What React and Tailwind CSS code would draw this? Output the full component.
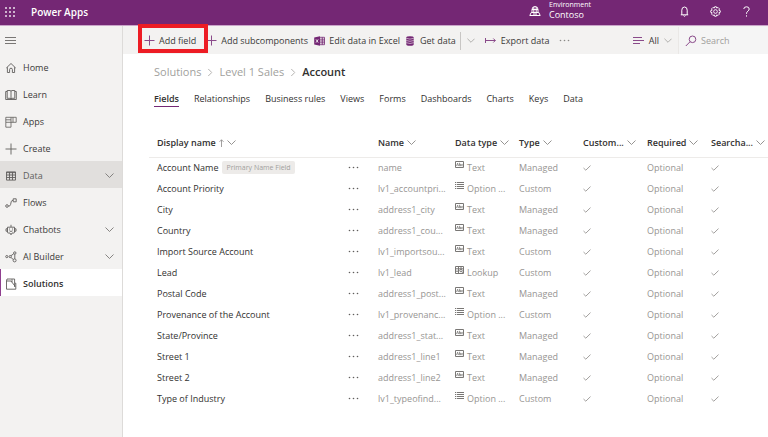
const DEFAULTS = {
  fill: "none",
  stroke: "currentColor",
  strokeWidth: 1,
  "aria-hidden": true,
};

function Svg({ box = "0 0 12 12", className = "size-3", children, ...rest }) {
  return (
    <svg {...DEFAULTS} {...rest} viewBox={box} className={"shrink-0 " + className}>
      {children}
    </svg>
  );
}

const Chevron = ({ className = "h-[5px] w-[9px] text-[#8a8886]" }) => (
  <Svg box="0 0 9 5" className={className} strokeWidth={0.9}>
    <path d="M0.5 0.5 4.5 4.5 8.5 0.5" />
  </Svg>
);

const Plus = ({ className = "size-[11px] text-[#8a4a8a]" }) => (
  <Svg box="0 0 11 11" className={className}>
    <path d="M5.5 0.5V10.5M0.5 5.5H10.5" />
  </Svg>
);

const Dots = () => (
  <Svg box="0 0 11 3" className="h-[3px] w-[11px]" stroke="none" fill="currentColor">
    <circle cx="1.5" cy="1.5" r="0.8" />
    <circle cx="5.5" cy="1.5" r="0.8" />
    <circle cx="9.5" cy="1.5" r="0.8" />
  </Svg>
);

const ICONS = {
  home: (
    <path d="M1.3 6 6 1.5 10.7 6M2.4 5.2V10.5H4.6V7.6Q4.6 6.2 6 6.2Q7.4 6.2 7.4 7.6V10.5H9.6V5.2" />
  ),
  learn: (
    <path d="M2.2 1.5H5Q6 1.5 6 2.5Q6 1.5 7 1.5H9.8V9.3H7Q6 9.3 6 10.3Q6 9.3 5 9.3H2.2ZM6 2.5V10M2.2 2.5H0.7V10.5H11.3V2.5H9.8" />
  ),
  apps: <path d="M0.8 1.3H11.2V6.3H0.8ZM0.8 6.3V11.2H6V1.3M6 6.3H6M8 1.3V6.3M0.8 3.8H6" strokeWidth={0.8} />,
  create: <path d="M6 0.5V11.5M0.5 6H11.5" />,
  data: (
    <path d="M1.5 1.9H10.5V10.1H1.5ZM1.5 2.6H10.5M1.5 5H10.5M1.5 7.5H10.5M4.5 2V10M7.5 2V10" />
  ),
  flows: (
    <>
      <circle cx="2" cy="9" r="1.3" />
      <path d="M3.4 9H4.2Q5.2 9 5.6 7.5L6.2 4.8Q6.6 3.3 8 3.3M8.2 1.8H11.2V4.8H8.2Z" />
    </>
  ),
  chatbots: (
    <>
      <path d="M6 0.8V3M2.5 3.2H9.5V8.3Q9.5 9 8.8 9H7L6 10.8 5 9H3.2Q2.5 9 2.5 8.3ZM2.5 4.8H1V7.2H2.5M9.5 4.8H11V7.2H9.5M4.4 6.8Q6 8.2 7.6 6.8" />
      <path d="M4.5 4.5V5.5M7.5 4.5V5.5" />
    </>
  ),
  ai: (
    <>
      <circle cx="1.8" cy="5.6" r="1.1" />
      <circle cx="5.2" cy="5.6" r="1.1" />
      <circle cx="9.8" cy="2" r="1.2" />
      <circle cx="9.6" cy="9.4" r="1.5" />
      <path d="M6 4.7 8.8 2.7M6 6.5 8.3 8.5M9.8 3.2V7.9" />
    </>
  ),
  solutions: (
    <path d="M1.5 3V11.2H10.8V5.2M1.5 3 2 1H9.6V5.2H10.8M1.5 3H6L10.2 8.4M9.6 5.2V9M7 1.2V4.2" />
  ),
};

const NAV = [
  { label: "Home", icon: "home" },
  { label: "Learn", icon: "learn" },
  { label: "Apps", icon: "apps" },
  { label: "Create", icon: "create" },
  { label: "Data", icon: "data", menu: true, shaded: true },
  { label: "Flows", icon: "flows" },
  { label: "Chatbots", icon: "chatbots", menu: true },
  { label: "AI Builder", icon: "ai", menu: true },
  { label: "Solutions", icon: "solutions", current: true },
];

const TABS = [
  "Fields",
  "Relationships",
  "Business rules",
  "Views",
  "Forms",
  "Dashboards",
  "Charts",
  "Keys",
  "Data",
];

const COLUMNS = ["Name", "Data type", "Type", "Custom...", "Required", "Searcha..."];

const FIELDS = [
  ["Account Name", "name", "Text", "Managed"],
  ["Account Priority", "lv1_accountpri...", "Option ...", "Custom"],
  ["City", "address1_city", "Text", "Managed"],
  ["Country", "address1_cou...", "Text", "Managed"],
  ["Import Source Account", "lv1_importsou...", "Text", "Custom"],
  ["Lead", "lv1_lead", "Lookup", "Custom"],
  ["Postal Code", "address1_post...", "Text", "Managed"],
  ["Provenance of the Account", "lv1_provenanc...", "Option ...", "Custom"],
  ["State/Province", "address1_stat...", "Text", "Managed"],
  ["Street 1", "address1_line1", "Text", "Managed"],
  ["Street 2", "address1_line2", "Text", "Managed"],
  ["Type of Industry", "lv1_typeofind...", "Option ...", "Custom"],
];

function TypeIcon({ type }) {
  if (type === "Text") {
    return (
      <Svg box="0 0 9 7" className="h-[7px] w-[9px] text-[#797775]">
        <path d="M0.5 0.5H8.5V6.5H0.5Z" />
        <path d="M1.6 5 2.6 2.2 3.5 5M4.6 1.8V4.8H5.5V3.4H4.6M7.7 3.4H6.7V4.8H7.7" strokeWidth={0.8} />
      </Svg>
    );
  }
  if (type === "Lookup") {
    return (
      <Svg box="0 0 9 8" className="h-2 w-[9px] text-[#797775]">
        <path d="M0.5 0.5H8.5V7.5H0.5ZM0.5 2.8H8.5M0.5 5.2H3.5M3.5 0.5V7.5M6 0.5V3" />
        <circle cx="6" cy="4.6" r="1.2" />
        <path d="M6.9 5.5 8.3 7" />
      </Svg>
    );
  }
  return (
    <Svg box="0 0 9 7" className="h-[7px] w-[9px] text-[#797775]">
      <path d="M0 0.5H1.3M2 0.5H9M0 2.5H1.3M2 2.5H9M0 4.5H1.3M2 4.5H9M0 6.5H1.3M2 6.5H9" />
    </Svg>
  );
}

const Check = () => (
  <Svg box="0 0 8 6" className="h-1.5 w-2 text-[#979593]" role="img" aria-hidden={false} aria-label="Yes">
    <path d="M0.5 3 2.8 5.2 7.5 0.6" strokeWidth={0.9} />
  </Svg>
);

function Header() {
  return (
    <header className="flex h-[26px] items-center border-b border-[#c9a4c9] bg-[#742774] pb-0.5 text-white">
      <button type="button" aria-label="App launcher" className="ml-[5px]">
        <Svg box="0 0 10 10" className="size-[10px]" stroke="none" fill="currentColor">
          {[1, 5, 9].map((y) =>
            [1, 5, 9].map((x) => <rect key={x + "-" + y} x={x - 0.8} y={y - 0.8} width="1.6" height="1.6" />)
          )}
        </Svg>
      </button>
      <span className="ml-4 pt-0.5 text-[10px] font-semibold">Power Apps</span>
      <button type="button" className="ml-auto flex w-[150px] items-start gap-2 self-start text-left">
        <Svg box="0 0 12 12" className="mt-[5px] size-3">
          <path d="M3 7.5V4.5Q3 1.5 6 1.5Q9 1.5 9 4.5V7.5M3 4.5H9M4.8 2V7.5M7.2 2V7.5M2.2 7.5H9.8L11.2 10.5H0.8ZM4 9H8" />
        </Svg>
        <span className="flex flex-col">
          <span className="text-[7px] leading-[9px]">Environment</span>
          <span className="text-[9px] leading-[11px]">Contoso</span>
        </span>
      </button>
      <div className="flex items-center gap-5 pr-4">
        <button type="button" aria-label="Notifications">
          <Svg box="0 0 11 11" className="size-[11px]">
            <path d="M1.8 8.8H9.2M2.8 8.8V4.2Q2.8 1 5.5 1Q8.2 1 8.2 4.2V8.8M4.5 9.6Q5.5 11 6.5 9.6" />
          </Svg>
        </button>
        <button type="button" aria-label="Settings">
          <Svg box="0 0 12 12" className="size-[11px]">
            <path d="M5.1 0.8H6.9L7.3 2.2 8.8 1.6 10.3 3.1 9.7 4.6 11.2 5.1V6.9L9.7 7.3 10.3 8.8 8.8 10.3 7.3 9.7 6.9 11.2H5.1L4.7 9.7 3.2 10.3 1.7 8.8 2.3 7.3 0.8 6.9V5.1L2.3 4.6 1.7 3.1 3.2 1.6 4.7 2.2Z" />
            <circle cx="6" cy="6" r="2" />
          </Svg>
        </button>
        <button type="button" aria-label="Help">
          <Svg box="0 0 11 11" className="size-[11px]">
            <path d="M2.8 3Q2.8 0.8 5.5 0.8Q8.2 0.8 8.2 3Q8.2 4.3 6.8 5.2Q5.5 6 5.5 7.8M5.5 9.3V10.6" />
          </Svg>
        </button>
      </div>
    </header>
  );
}

function Sidebar() {
  return (
    <nav aria-label="Main" className="w-[123px] shrink-0 border-r border-[#dddbd9] bg-[#f3f2f1]">
      <button type="button" aria-label="Collapse navigation" className="flex h-[27px] items-center pt-px pl-[5px] text-[#797775]">
        <Svg box="0 0 11 7" className="h-[7px] w-[11px]">
          <path d="M0 0.5H11M0 3.5H11M0 6.5H11" />
        </Svg>
      </button>
      <ul>
        {NAV.map(({ label, icon, menu, shaded, current }) => (
          <li key={label}>
            <a
              href="#"
              aria-current={current ? "page" : undefined}
              className={
                "flex h-[27px] items-center gap-[6px] border-l pt-0.5 pr-2 pl-1 text-[9px] " +
                (current
                  ? "border-[#8f3f8f] bg-white font-semibold text-[#323130]"
                  : shaded
                    ? "border-transparent bg-[#e1dfdd] text-[#605e5c]"
                    : "border-transparent text-[#3b3a39]")
              }
            >
              <Svg strokeWidth={0.9} className="size-3 text-[#605e5c]">
                {ICONS[icon]}
              </Svg>
              {label}
              {menu && (
                <span className="ml-auto">
                  <Chevron className="h-[5px] w-[9px] text-[#797775]" />
                </span>
              )}
            </a>
          </li>
        ))}
      </ul>
    </nav>
  );
}

function Toolbar() {
  return (
    <div className="flex h-7 shrink-0 items-center bg-[#f3f2f1] pt-px pl-[21px] text-[9px] whitespace-nowrap text-[#3b3a39]">
      <div className="flex items-center gap-1.5">
        <button type="button" className="relative mr-1 flex items-center gap-1">
          <Plus />
          Add field
          <span className="pointer-events-none absolute -top-2.5 -right-3 -bottom-1.5 -left-1.5 z-10 border-4 border-[#ed1c24]" />
        </button>
        <button type="button" className="flex items-center gap-1">
          <Plus />
          Add subcomponents
        </button>
        <button type="button" className="flex items-center gap-1">
          <Svg box="0 0 11 10" className="h-[10px] w-[11px] text-[#742774]" strokeWidth={0.8}>
            <path d="M6 1.3H10.5V8.7H6M6 3.2H10.5M6 5H10.5M6 6.8H10.5M8.3 1.3V8.7" />
            <path d="M0.2 1.4 6 0.3V9.7L0.2 8.6Z" fill="currentColor" stroke="none" />
            <path d="M2 3.4 4.2 6.6M4.2 3.4 2 6.6" stroke="#fff" />
          </Svg>
          Edit data in Excel
        </button>
        <button type="button" className="flex items-center gap-1.5">
          <Svg box="0 0 8 10" className="h-[10px] w-2 text-[#742774]" stroke="none" fill="currentColor">
            <path d="M0.3 1.6Q0.3 0.3 4 0.3Q7.7 0.3 7.7 1.6V8.4Q7.7 9.7 4 9.7Q0.3 9.7 0.3 8.4Z" />
            <path
              d="M0.3 2.3Q4 3.9 7.7 2.3M0.3 4.5Q4 6.1 7.7 4.5M0.3 6.7Q4 8.3 7.7 6.7"
              fill="none"
              stroke="#f3f2f1"
              strokeWidth={0.6}
            />
          </Svg>
          Get data
        </button>
      </div>
      <button type="button" aria-label="More data sources" className="ml-1 flex h-[18px] items-center border-l border-[#c8c6c4] px-1.5">
        <Chevron className="h-[5px] w-2 text-[#a19f9d]" />
      </button>
      <button type="button" className="ml-1 flex items-center gap-[5px]">
        <Svg box="0 0 11 7" className="h-[7px] w-[11px] text-[#8a4a8a]">
          <path d="M0.5 1V6M0.5 3.5H10.3M8.3 1.5 10.3 3.5 8.3 5.5" />
        </Svg>
        Export data
      </button>
      <button type="button" aria-label="More commands" className="ml-2.5 text-[#8a8886]">
        <Dots />
      </button>
      <button type="button" className="ml-auto flex items-center gap-[5px] pr-1.5">
        <Svg box="0 0 11 7" className="h-[7px] w-[11px] text-[#8a4a8a]">
          <path d="M0 0.5H9M0 3.5H11M0 6.5H7" />
        </Svg>
        All
        <Chevron className="h-[5px] w-2 text-[#a19f9d]" />
      </button>
      <label className="flex h-full w-[90px] items-center gap-1 border-l border-[#eae8e6] bg-[#f5f5f5] pl-1.5">
        <Svg box="0 0 12 12" className="size-3 text-[#8a4a8a]">
          <circle cx="7.5" cy="4.3" r="3.3" />
          <path d="M5.1 6.7 0.8 11" />
        </Svg>
        <input
          type="search"
          aria-label="Search"
          placeholder="Search"
          className="w-full min-w-0 bg-transparent outline-none placeholder:text-[#a19f9d]"
        />
      </label>
    </div>
  );
}

function FieldTable() {
  return (
    <table className="w-full table-fixed text-left text-[9px] whitespace-nowrap">
      <colgroup>
        <col />
        <col className="w-[30px]" />
        <col className="w-[77px]" />
        <col className="w-[64px]" />
        <col className="w-[64px]" />
        <col className="w-[64px]" />
        <col className="w-[64px]" />
        <col className="w-[65px]" />
      </colgroup>
      <thead>
        <tr className="h-7 border-b border-[#edebe9] text-[#323130]">
          <th scope="col" className="pl-2 font-semibold" aria-sort="ascending">
            <button type="button" className="flex items-center gap-[3px]">
              Display name
              <Svg box="0 0 5 8" className="h-2 w-[5px] text-[#8a8886]" strokeWidth={0.8}>
                <path d="M2.5 8V0.8M0.5 2.8 2.5 0.8 4.5 2.8" />
              </Svg>
              <Chevron />
            </button>
          </th>
          <td />
          {COLUMNS.map((name) => (
            <th key={name} scope="col" className="pl-2 font-semibold">
              <button type="button" className="flex items-center gap-[3px]">
                {name}
                <Chevron />
              </button>
            </th>
          ))}
        </tr>
      </thead>
      <tbody className="text-[#979593]">
        {FIELDS.map(([label, name, type, kind], i) => (
          <tr key={name} className="h-[21px]">
            <th scope="row" className="pl-2 font-normal text-[#323130]">
              <span className="flex items-center gap-1">
                {label}
                {i === 0 && (
                  <span className="rounded-xs bg-[#edebe9] px-1 text-[7px] leading-[13px] text-[#a19f9d]">Primary Name Field</span>
                )}
              </span>
            </th>
            <td className="pl-2">
              <button type="button" aria-label={"Actions for " + label} className="flex text-[#605e5c]">
                <Dots />
              </button>
            </td>
            <td className="pl-2">{name}</td>
            <td className="pl-2">
              <span className="flex gap-[3px]">
                <TypeIcon type={type} />
                {type}
              </span>
            </td>
            <td className="pl-2">{kind}</td>
            <td className="pl-2"><Check /></td>
            <td className="pl-2">Optional</td>
            <td className="pl-2"><Check /></td>
          </tr>
        ))}
      </tbody>
    </table>
  );
}

export default function App() {
  return (
    <div className="flex min-h-screen flex-col bg-white font-['Open_Sans','Noto_Sans',sans-serif] text-[#323130]">
      <Header />
      <div className="flex flex-1">
        <Sidebar />
        <main className="flex min-w-0 flex-1 flex-col">
          <Toolbar />
          <nav aria-label="Breadcrumb" className="mt-2.5 pl-[31px]">
            <ol className="flex items-center gap-[5px] text-[11px] leading-4">
              <li><a href="#" className="text-[#a19f9d]">Solutions</a></li>
              <li aria-hidden="true" className="-rotate-90"><Chevron className="h-[5px] w-2 text-[#a19f9d]" /></li>
              <li><a href="#" className="text-[#a19f9d]">Level 1 Sales</a></li>
              <li aria-hidden="true" className="-rotate-90"><Chevron className="h-[5px] w-2 text-[#a19f9d]" /></li>
              <li><h1 className="font-semibold">Account</h1></li>
            </ol>
          </nav>
          <div role="tablist" className="mt-3 flex gap-[15px] pl-[31px] text-[9px] leading-[13px]">
            {TABS.map((tab, i) => (
              <button
                key={tab}
                type="button"
                role="tab"
                aria-selected={i === 0}
                className={"border-b pb-px " + (i === 0 ? "border-[#742774] font-semibold" : "border-transparent")}
              >
                {tab}
              </button>
            ))}
          </div>
          <div className="mt-[22px] pl-[26px]">
            <FieldTable />
          </div>
        </main>
      </div>
    </div>
  );
}
